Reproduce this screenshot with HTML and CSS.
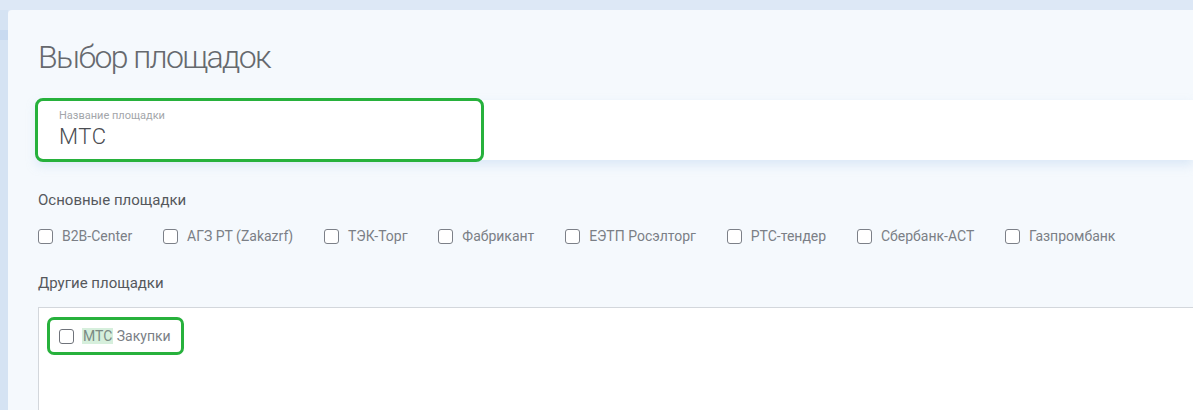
FILE: index.html
```html
<!DOCTYPE html>
<html lang="ru">
<head>
<meta charset="utf-8">
<title>Выбор площадок</title>
<link rel="stylesheet" href="styles.css">
</head>
<body>
<div class="page">
  <div class="rail"><div class="rail-mark"></div></div>
  <main class="panel">
    <h1 class="title">Выбор площадок</h1>
    <div class="field">
      <div class="field-label">Название площадки</div>
      <div class="field-value">МТС</div>
      <div class="field-focus"></div>
    </div>
    <div class="section-label">Основные площадки</div>
    <div class="checks">
      <label class="check"><span class="box"></span><span class="text">B2B-Center</span></label>
      <label class="check"><span class="box"></span><span class="text">АГЗ РТ (Zakazrf)</span></label>
      <label class="check"><span class="box"></span><span class="text">ТЭК-Торг</span></label>
      <label class="check"><span class="box"></span><span class="text">Фабрикант</span></label>
      <label class="check"><span class="box"></span><span class="text">ЕЭТП Росэлторг</span></label>
      <label class="check"><span class="box"></span><span class="text">РТС-тендер</span></label>
      <label class="check"><span class="box"></span><span class="text">Сбербанк-АСТ</span></label>
      <label class="check"><span class="box"></span><span class="text">Газпромбанк</span></label>
    </div>
    <div class="section-label section-label-other">Другие площадки</div>
    <div class="other-box">
      <label class="check found"><span class="box"></span><span class="text"><mark class="hl">МТС</mark> Закупки</span></label>
    </div>
  </main>
</div>
</body>
</html>
```
FILE: styles.css
```css
html, body {
  margin: 0;
  padding: 0;
  height: 100%;
  overflow: hidden;
}
body {
  background: #dde8f6;
  font-family: Roboto, "Noto Sans", "Liberation Sans", sans-serif;
}
.page {
  display: flex;
  height: 100%;
}
.rail {
  width: 8px;
  margin-top: 10px;
  background: #d5e3f3;
  flex: none;
}
.rail-mark {
  margin-top: 20px;
  height: 10px;
  background: #c8daf0;
}
.panel {
  flex: 1;
  margin-top: 10px;
  background: #f5f9fd;
  border-top-left-radius: 4px;
  padding: 28px 0 0 29px;
}
.title {
  margin: 0;
  font-size: 32px;
  line-height: 38px;
  font-weight: 300;
  letter-spacing: -1.6px;
  color: #66696e;
  padding-left: 1px;
}
.field {
  position: relative;
  margin-top: 24px;
  height: 60px;
  background: #fff;
  box-sizing: border-box;
  padding: 9px 0 0 22px;
  box-shadow: 0 5px 10px rgba(170, 200, 235, 0.35);
}
.field-label {
  font-size: 11px;
  line-height: 13px;
  color: #a3a6aa;
}
.field-value {
  margin-top: 2px;
  font-size: 22px;
  line-height: 26px;
  font-weight: 300;
  letter-spacing: 0.6px;
  color: #4a4d52;
}
.field-focus {
  position: absolute;
  left: -2px;
  top: -2px;
  width: 449px;
  height: 64px;
  box-sizing: border-box;
  border: 3px solid #27b13c;
  border-radius: 8px;
}
.section-label {
  margin-top: 31px;
  font-size: 15px;
  line-height: 18px;
  color: #55585c;
  padding-left: 1px;
}
.checks {
  display: flex;
  margin-top: 17px;
  padding-left: 1px;
}
.check {
  display: flex;
  align-items: center;
  height: 20px;
  margin-right: 30.8px;
}
.box {
  width: 15px;
  height: 15px;
  box-sizing: border-box;
  border: 1px solid #7c8088;
  border-radius: 3px;
  background: #fff;
  margin-right: 9px;
  flex: none;
}
.text {
  font-size: 14px;
  line-height: 18px;
  color: #7b7f86;
  white-space: nowrap;
}
.section-label-other {
  margin-top: 28px;
}
.other-box {
  margin-top: 15px;
  margin-left: 1px;
  height: 200px;
  background: #fff;
  border: 1px solid #d3d7dc;
  border-right: none;
  padding: 9px 0 0 8px;
}
.found {
  display: inline-flex;
  height: auto;
  margin: 0;
  padding: 7px 10px 7px 9px;
  border: 3px solid #27b13c;
  border-radius: 7px;
}
.found .box {
  border-color: #6f737a;
}
.hl {
  background: #d6efdc;
  color: #7a8a84;
  padding: 0 1px;
  margin-left: -1px;
}
```
